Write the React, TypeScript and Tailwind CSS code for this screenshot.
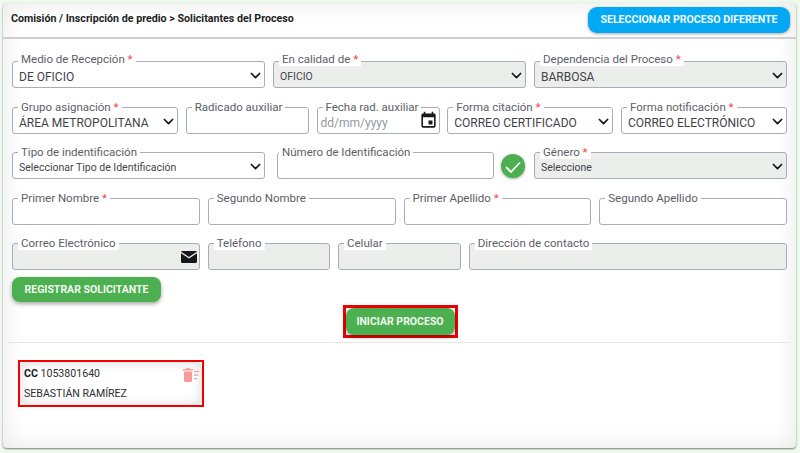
import type { ReactNode } from "react";

type FieldProps = {
  label: string;
  required?: boolean;
  value?: string;
  small?: boolean;
  disabled?: boolean;
  select?: boolean;
  muted?: boolean;
  raised?: boolean;
  tight?: boolean;
  icon?: ReactNode;
};

function Chevron() {
  return (
    <svg width="11" height="8" viewBox="0 0 11 8" fill="none" className="absolute right-[3px] top-[10px]">
      <path d="M1.400 1.500 5.500 5.600 9.600 1.500" stroke="#14161a" strokeWidth="1.700" strokeLinecap="round" strokeLinejoin="round" />
    </svg>
  );
}

function Field({ label, required, value, small, disabled, select, muted, raised, tight, icon }: FieldProps) {
  return (
    <div
      className={`relative h-[27px] rounded-[3px] border border-[#a9adb5] ${disabled ? "bg-[#eceeec]" : "bg-white"}`}
    >
      <span
        className={`absolute whitespace-nowrap bg-white px-[3px] text-[11.5px] leading-[14px] text-[#5b6068] ${raised ? "top-[-10px]" : "top-[-8px]"} ${tight ? "left-[1px]" : "left-[5px]"}`}
      >
        {label}
        {required && <span className="text-[#f44336]"> *</span>}
      </span>
      {value && (
        <span
          className={`absolute top-[7px] whitespace-nowrap leading-[16px] ${muted ? "left-[3px] text-[11.5px] text-[#94989e]" : "left-[6px] text-[#3f444b]"} ${small ? "text-[10.5px]" : "text-[12px]"}`}
        >
          {value}
        </span>
      )}
      {select && <Chevron />}
      {icon}
    </div>
  );
}

function GreenButton({ children, className }: { children: ReactNode; className: string }) {
  return (
    <button
      className={`block rounded-[8px] bg-[#4caf50] text-[10.5px] font-bold text-[#f1f8f1] shadow-[0_2px_4px_rgba(0,0,0,0.35)] ${className}`}
    >
      {children}
    </button>
  );
}

export default function App() {
  return (
    <div className="h-[453px] w-[800px] bg-[#eefaee] pb-[5px] pl-[3px] pr-[4px] pt-[3px] font-['Roboto',sans-serif]">
      <div className="flex h-[445px] flex-col rounded-[4px] bg-white shadow-[0_1px_2px_rgba(0,0,0,0.5),inset_0_0_24px_rgba(0,0,0,0.1)]">
        <header className="flex h-[36px] shrink-0 items-start justify-between border-b-2 border-[#cfcfcf] pl-[8px] pr-[6px]">
          <h1 className="mt-[9px] text-[10.7px] font-bold leading-[13px] text-[#1d1f22]">
            Comisión / Inscripción de predio &gt; Solicitantes del Proceso
          </h1>
          <button className="mt-[4px] h-[26px] w-[202px] rounded-[9px] bg-[#03a9f4] text-[10.6px] font-bold text-[#f2fbff] shadow-[0_1px_3px_rgba(0,0,0,0.35)]">
            SELECCIONAR PROCESO DIFERENTE
          </button>
        </header>

        <div className="flex flex-col gap-[19px] px-[9px] pt-[22px]">
          <div className="grid grid-cols-3 gap-[8px]">
            <Field raised label="Medio de Recepción" required value="DE OFICIO" select />
            <Field raised label="En calidad de" required value="OFICIO" small disabled select />
            <Field raised label="Dependencia del Proceso" required value="BARBOSA" disabled select />
          </div>
          <div className="grid grid-cols-[166px_123px_123px_166px_166px] gap-[7.75px]">
            <Field label="Grupo asignación" required value="ÁREA METROPOLITANA" select />
            <Field label="Radicado auxiliar" />
            <Field
              label="Fecha rad. auxiliar"
              value="dd/mm/yyyy"
              muted
              icon={
                <svg width="19" height="19" viewBox="0 0 24 24" className="absolute right-[1px] top-[3px]" fill="#1a1a1a">
                  <path d="M17 12h-5v5h5v-5ZM16 1v2H8V1H6v2H5c-1.110 0-1.990.9-1.990 2L3 19c0 1.100.89 2 2 2h14c1.100 0 2-.9 2-2V5c0-1.100-.9-2-2-2h-1V1h-2Zm3 18H5V8h14v11Z" />
                </svg>
              }
            />
            <Field label="Forma citación" required value="CORREO CERTIFICADO" select />
            <Field label="Forma notificación" required value="CORREO ELECTRÓNICO" select />
          </div>
          <div className="-mt-[1px] grid grid-cols-[253px_217px_253px] items-center gap-x-[8px]">
            <Field label="Tipo de indentificación" value="Seleccionar Tipo de Identificación" small select />
            <div className="ml-[4px] flex w-[249px] items-center gap-[7px]">
              <div className="w-[217px] shrink-0">
                <Field tight label="Número de Identificación" />
              </div>
              <span className="mt-[1px] size-[24px] shrink-0 rounded-full bg-[#4caf50] shadow-[0_1px_3px_rgba(0,0,0,0.35)]">
                <svg width="24" height="24" viewBox="0 0 24 24" fill="none">
                  <path d="M5.500 13.500 10 18 18.500 9" stroke="#fff" strokeWidth="1.800" strokeLinecap="round" strokeLinejoin="round" />
                </svg>
              </span>
            </div>
            <div className="ml-[36px] w-[253px]">
              <Field label="Género" required value="Seleccione" small disabled select />
            </div>
          </div>
          <div className="grid grid-cols-4 gap-[8px]">
            <Field label="Primer Nombre" required />
            <Field label="Segundo Nombre" />
            <Field label="Primer Apellido" required />
            <Field label="Segundo Apellido" />
          </div>
          <div className="-mt-[1px] grid h-[28px] grid-cols-[188px_122.5px_123px_318px] gap-[7.75px]">
            <Field
              label="Correo Electrónico"
              disabled
              icon={
                <svg width="16" height="12" viewBox="0 0 16 12" className="absolute right-[2px] top-[7px]">
                  <path d="M1.200 0h13.600c.5 0 .9.3 1.100.7L8 5.900.1.7C.3.3.7 0 1.200 0Z" fill="#14161a" />
                  <path d="M0 2.200V10.800C0 11.500.5 12 1.200 12h13.600c.7 0 1.200-.5 1.200-1.200V2.200L8 7.400 0 2.200Z" fill="#14161a" />
                </svg>
              }
            />
            <Field label="Teléfono" disabled />
            <Field label="Celular" disabled />
            <Field label="Dirección de contacto" disabled />
          </div>
        </div>

        <div className="pl-[9px] pt-[6px]">
          <GreenButton className="h-[25px] w-[149px]">REGISTRAR SOLICITANTE</GreenButton>
        </div>

        <div className="mt-[3px] flex justify-center pl-[1px]">
          <div className="border-[3px] border-[#f00000]">
            <GreenButton className="h-[27px] w-[109px]">INICIAR PROCESO</GreenButton>
          </div>
        </div>

        <div className="ml-[5px] mr-[6px] mt-[4px] border-t border-[#e6e6e6]" />

        <div className="pl-[15px] pt-[17px]">
          <div className="w-[186px] border-2 border-[#f00000]">
            <div className="relative h-[43px] rounded-[6px] bg-white px-[4px] pt-[5px] text-[10.6px] leading-[13px] text-[#2b2e33] shadow-[inset_0_0_12px_rgba(0,0,0,0.16)]">
              <p>
                <b className="text-[#1a1c1f]">CC</b> 1053801640
              </p>
              <p className="mt-[7px]">SEBASTIÁN RAMÍREZ</p>
              <svg width="16" height="14" viewBox="0 0 16 14" fill="#f79c98" className="absolute right-[3px] top-[6px]">
                <path d="M3.500 0h3v1H10v1.500H0V1h3.500V0Z" />
                <path d="M1 3.500h8V12.500c0 .8-.6 1.500-1.400 1.500H2.400C1.600 14 1 13.300 1 12.500V3.500Z" />
                <path d="M11 3h5v1.200h-5zM11 6.500h4v1.200h-4zM11 10h3v1.200h-3z" />
              </svg>
            </div>
          </div>
        </div>
      </div>
    </div>
  );
}
